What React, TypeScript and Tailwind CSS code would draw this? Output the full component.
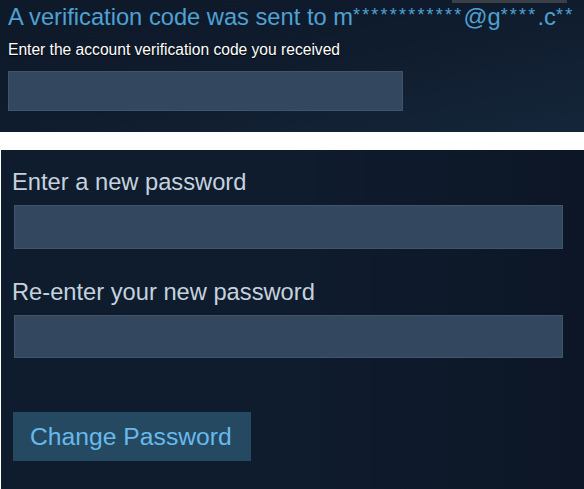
import React from "react";

export default function App() {
  const font = { fontFamily: '"Liberation Sans", Arial, sans-serif' };
  return (
    <div className="w-[584px] h-[489px] bg-white flex flex-col" style={font}>
      <div className="h-[132px] w-full flex flex-col bg-gradient-to-br from-[#0e1929] via-[#0f1c2d] to-[#15263a]">
        <div className="h-[3px] flex">
          <div className="ml-[452px] w-[115px] h-[3px] bg-[#3b3f46]" />
        </div>
        <div className="pl-[8px] flex flex-col">
          <div className="h-[28px] text-[23.7px] leading-[28px] text-[#4fa1d3] whitespace-nowrap">
            A verification code was sent to m
            <span className="text-[18px] leading-none tracking-[2.2px] align-[4px]">************</span>
            @g
            <span className="text-[18px] leading-none tracking-[2.2px] align-[4px]">****</span>
            .c
            <span className="text-[18px] leading-none tracking-[2.2px] align-[4px]">**</span>
          </div>
          <div className="mt-[10px] text-[15.6px] leading-[18px] text-white [text-shadow:0_1px_1px_#000]">
            Enter the account verification code you received
          </div>
          <div className="mt-[12px] w-[395px] h-[40px] bg-[#33475f] border border-[#3f546d]" />
        </div>
      </div>
      <div className="mt-[18px] ml-[1px] h-[339px] flex flex-col pl-[11px] bg-gradient-to-r from-[#0f1c2e] via-[#0f1c2e] to-[#0c1626]">
        <div className="mt-[18px] text-[23.7px] leading-[28px] text-[#c5d2dd]">
          Enter a new password
        </div>
        <div className="mt-[9px] ml-[2px] w-[549px] h-[44px] bg-[#33475f] border border-[#3f546d]" />
        <div className="mt-[29px] text-[23.7px] leading-[28px] text-[#c5d2dd]">
          Re-enter your new password
        </div>
        <div className="mt-[9px] ml-[2px] w-[549px] h-[43px] bg-[#33475f] border border-[#3f546d]" />
        <div className="mt-[54px] ml-[1px] w-[238px] h-[49px] bg-[#254961] flex items-center pl-[17px] text-[24.7px] text-[#67baec]">
          Change Password
        </div>
      </div>
    </div>
  );
}
